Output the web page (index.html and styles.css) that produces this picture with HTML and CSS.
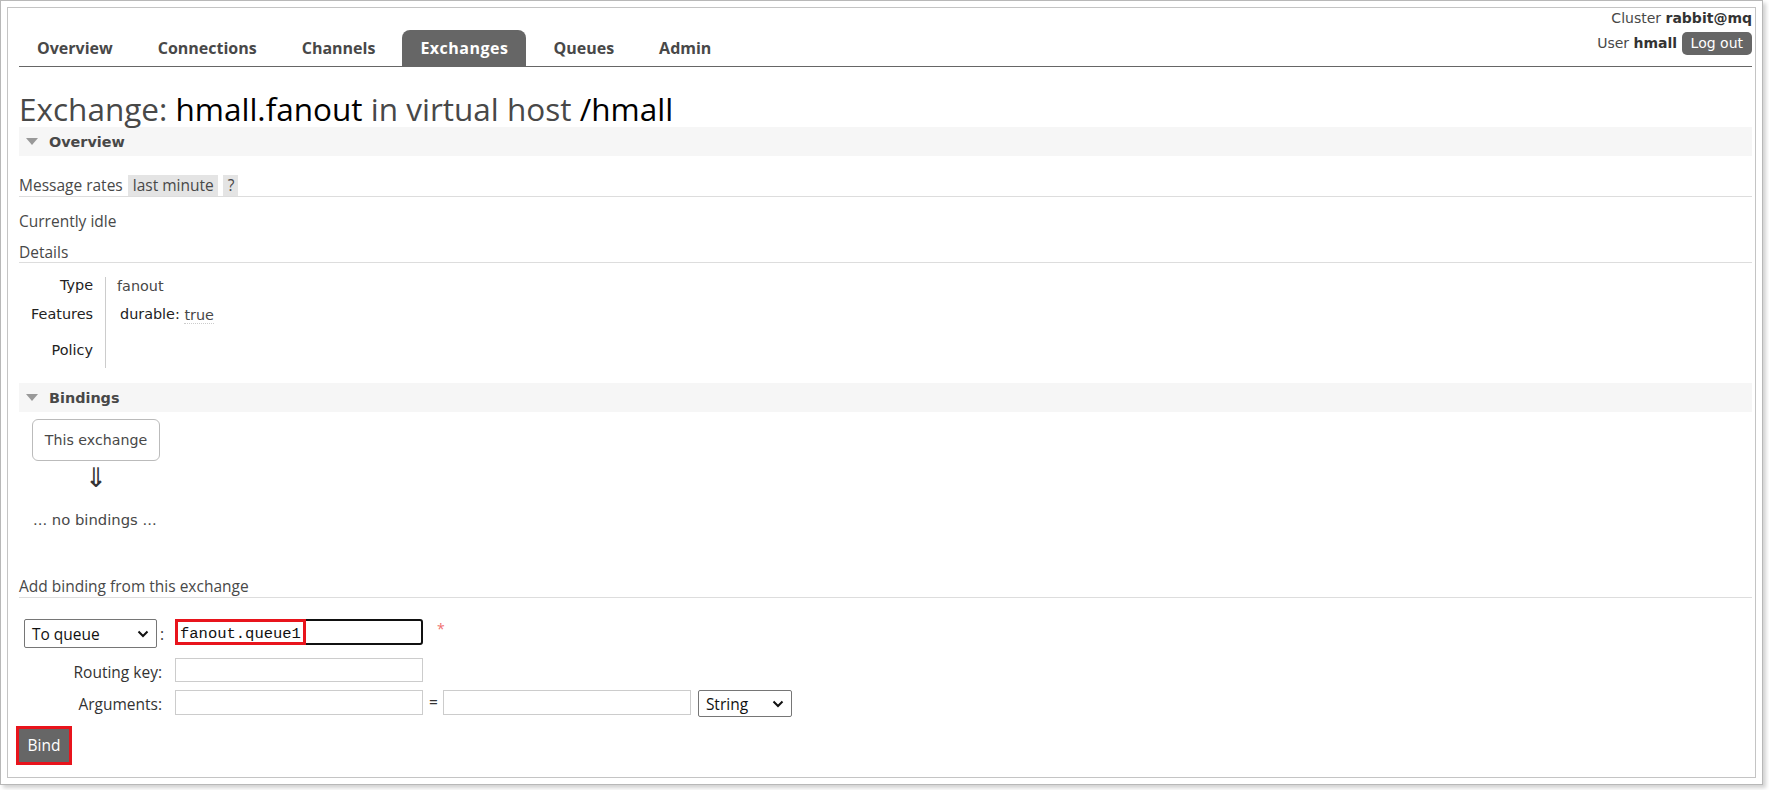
FILE: index.html
```html
<!DOCTYPE html>
<html>
<head>
<meta charset="utf-8">
<link rel="stylesheet" href="styles.css">
</head>
<body>
<div class="shot">
  <div class="page">
    <header class="top">
      <nav class="tabs">
        <a class="tab">Overview</a>
        <a class="tab">Connections</a>
        <a class="tab">Channels</a>
        <a class="tab active">Exchanges</a>
        <a class="tab">Queues</a>
        <a class="tab">Admin</a>
      </nav>
      <div class="login">
        <div class="login-row">Cluster <b>rabbit@mq</b></div>
        <div class="login-row second">User <b>hmall</b> <span class="logout">Log out</span></div>
      </div>
    </header>

    <h1 class="title">Exchange: <span class="hl">hmall.fanout</span> in virtual host <span class="hl">/hmall</span></h1>

    <div class="section-bar"><span class="tri"></span>Overview</div>
    <div class="section-body">
      <div class="rates-head">
        <span>Message rates</span>
        <span class="chip">last minute</span>
        <span class="chip q">?</span>
      </div>
      <p class="idle">Currently idle</p>
      <div class="sub-head">Details</div>
      <div class="details">
        <div class="dlabels">
          <div class="dl r1">Type</div>
          <div class="dl r2">Features</div>
          <div class="dl r3">Policy</div>
        </div>
        <div class="dvalues">
          <div class="dv r1">fanout</div>
          <div class="dv r2"><span class="key">durable:</span> <span class="val">true</span></div>
          <div class="dv r3"></div>
        </div>
      </div>
    </div>

    <div class="section-bar"><span class="tri"></span>Bindings</div>
    <div class="bindings">
      <div class="this-ex">This exchange</div>
      <div class="arrow">&#8659;</div>
      <div class="nobind">... no bindings ...</div>
    </div>

    <div class="sub-head add">Add binding from this exchange</div>
    <div class="form">
      <div class="fl sel-cell">
        <span class="select wide">To queue<svg class="chev" width="12" height="8" viewBox="0 0 12 8"><path d="M1.5 1.5 L6 6 L10.5 1.5" fill="none" stroke="#111" stroke-width="2"/></svg></span><span class="colon">:</span>
      </div>
      <div class="fv">
        <span class="input focus"><span class="mono">fanout.queue1</span><span class="mark"></span></span>
        <span class="star">*</span>
      </div>
      <div class="fl lbl">Routing key:</div>
      <div class="fv"><span class="input"></span></div>
      <div class="fl lbl">Arguments:</div>
      <div class="fv">
        <span class="input tall"></span><span class="eq">=</span><span class="input tall"></span>
        <span class="select small">String<svg class="chev" width="12" height="8" viewBox="0 0 12 8"><path d="M1.5 1.5 L6 6 L10.5 1.5" fill="none" stroke="#111" stroke-width="2"/></svg></span>
      </div>
    </div>
    <div class="bind-wrap"><span class="bind">Bind</span></div>
  </div>
</div>
</body>
</html>
```
FILE: styles.css
```css
html, body {
  margin: 0;
  padding: 0;
  background: #fff;
}
body {
  width: 1769px;
  height: 790px;
  overflow: hidden;
  color: #484848;
  font-family: "Open Sans", "Liberation Sans", sans-serif;
}
.shot {
  box-sizing: border-box;
  width: 1763px;
  height: 785px;
  border: 1px solid #b8b8b8;
  box-shadow: 3px 3px 4px rgba(0, 0, 0, 0.18);
  padding: 6px;
  background: #fff;
}
.page {
  box-sizing: border-box;
  height: 100%;
  border: 1px solid #c4c4c4;
  padding: 2px 3px 0 11px;
}

/* header */
.top {
  display: flex;
  justify-content: space-between;
  align-items: flex-start;
  border-bottom: 1px solid #666;
  height: 56px;
}
.tabs {
  display: flex;
  gap: 9px;
  align-self: flex-end;
}
.tab {
  display: block;
  padding: 0 18px;
  height: 36px;
  line-height: 36px;
  font-family: "Open Sans", "Liberation Sans", sans-serif;
  font-weight: bold;
  font-size: 16px;
  color: #484848;
  border-radius: 8px 8px 0 0;
}
.tab.active {
  background: #666;
  color: #fff;
  letter-spacing: 0.5px;
}
.login {
  font-family: "DejaVu Sans", Verdana, sans-serif;
  font-size: 14px;
  text-align: right;
  color: #484848;
}
.login-row {
  height: 17px;
  line-height: 17px;
}
.login-row.second {
  margin-top: 5px;
  height: 23px;
  line-height: 23px;
}
.login b {
  color: #333;
}
.logout {
  display: inline-block;
  background: #666;
  color: #fff;
  border-radius: 5px;
  padding: 0 9px;
  height: 23px;
  line-height: 23px;
  vertical-align: top;
}

/* title */
.title {
  font-family: "Open Sans", "Liberation Sans", sans-serif;
  font-weight: normal;
  font-size: 31.5px;
  line-height: 40px;
  margin: 22px 0 0 0;
  height: 38px;
  color: #484848;
}
.title .hl {
  color: #000;
}

/* sections */
.section-bar {
  display: flex;
  align-items: center;
  height: 29px;
  background: #f6f6f6;
  font-family: "DejaVu Sans", Verdana, sans-serif;
  font-weight: bold;
  font-size: 14.4px;
  color: #484848;
}
.tri {
  width: 0;
  height: 0;
  border-left: 6.5px solid transparent;
  border-right: 6.5px solid transparent;
  border-top: 7px solid #999;
  margin: 0 11px 0 7px;
}
.section-body {
  padding-top: 19px;
}
.rates-head {
  display: flex;
  align-items: stretch;
  border-bottom: 1px solid #ddd;
  font-size: 15.5px;
  height: 21px;
  line-height: 21px;
}
.chip {
  background: #e4e4e4;
  padding: 0 4px 0 5px;
  margin-left: 5px;
}
.idle {
  margin: 0;
  font-size: 15.5px;
  height: 20px;
  line-height: 20px;
  margin-top: 14px;
}
.sub-head {
  font-size: 15.5px;
  border-bottom: 1px solid #ddd;
  height: 20px;
  line-height: 20px;
  margin-top: 11px;
}
.details {
  display: flex;
  margin-top: 14px;
  font-family: "DejaVu Sans", Verdana, sans-serif;
  font-size: 14.4px;
}
.dlabels {
  width: 74px;
  text-align: right;
  border-right: 1px solid #ccc;
  padding-right: 12px;
  color: #222;
}
.dvalues {
  padding-left: 11px;
}
.dl, .dv {
  line-height: 17px;
}
.r1 { height: 26px; }
.r2 { height: 34px; }
.r3 { height: 31px; }
.dl.r1 { padding-top: 0; }
.dl.r2 { padding-top: 3px; height: 31px; }
.dv.r1 { padding-top: 1px; height: 25px; color: #484848; }
.dv.r2 { padding-left: 3px; color: #222; padding-top: 3px; height: 31px; }
.val {
  color: #484848;
  border-bottom: 1px dotted #ccc;
  position: relative;
  top: 1px;
}
.dl.r3 { padding-top: 5px; height: 26px; }

.section-body + .section-bar {
  margin-top: 15px;
}

/* bindings */
.bindings {
  padding: 7px 0 0 13px;
  font-family: "DejaVu Sans", Verdana, sans-serif;
  font-size: 14.2px;
}
.this-ex {
  box-sizing: border-box;
  width: 128px;
  height: 42px;
  line-height: 40px;
  border: 1px solid #bbb;
  border-radius: 6px;
  text-align: center;
}
.arrow {
  width: 128px;
  text-align: center;
  font-size: 27px;
  line-height: 28px;
  height: 28px;
  margin-top: 3px;
  color: #333;
}
.nobind {
  margin-top: 19px;
  padding-left: 1px;
  line-height: 17px;
  font-size: 14.8px;
}
.sub-head.add {
  margin-top: 48px;
  height: 21px;
  line-height: 21px;
}

/* form */
.form {
  display: grid;
  grid-template-columns: 150px auto;
  grid-template-rows: 39px 32px 27px;
  column-gap: 6px;
  margin-top: 21px;
  font-size: 15.5px;
  align-items: start;
}
.fl {
  text-align: right;
  padding-right: 7px;
  color: #333;
}
.fl.lbl {
  padding-top: 2px;
  line-height: 24px;
}
.sel-cell {
  display: flex;
  justify-content: flex-end;
  align-items: center;
  padding-right: 5px;
  height: 29px;
}
.fv {
  display: flex;
  align-items: flex-start;
}
.select {
  box-sizing: border-box;
  display: inline-flex;
  align-items: center;
  justify-content: space-between;
  border: 1px solid #767676;
  border-radius: 2px;
  background: #fff;
  color: #111;
  padding: 0 7px 0 7px;
  font-size: 15.5px;
}
.select.wide {
  width: 133px;
  height: 29px;
}
.select.small {
  width: 94px;
  height: 27px;
  margin-left: 7px;
}
.colon {
  margin-left: 3px;
  color: #333;
}
.input {
  box-sizing: border-box;
  display: inline-block;
  position: relative;
  width: 248px;
  height: 24px;
  border: 1px solid #ccc;
  background: #fff;
}
.input.tall {
  height: 25px;
}
.input.focus {
  height: 26px;
  border: 2px solid #111;
  border-radius: 3px;
}
.mono {
  font-family: "Liberation Mono", "Courier New", monospace;
  font-size: 15.5px;
  line-height: 22px;
  padding-left: 3px;
  color: #111;
}
.mark {
  position: absolute;
  left: -2px;
  top: -2px;
  width: 131px;
  height: 26px;
  box-sizing: border-box;
  border: 3px solid #e8141c;
}
.star {
  color: #f07070;
  margin-left: 14px;
  font-size: 14px;
  margin-top: 0;
}
.eq {
  margin: 0 5px 0 6px;
  color: #333;
  line-height: 25px;
}
.bind-wrap {
  margin-top: 9px;
  margin-left: -3px;
}
.bind {
  display: inline-block;
  box-sizing: border-box;
  width: 56px;
  height: 39px;
  line-height: 33px;
  text-align: center;
  background: #666;
  color: #fff;
  border: 3px solid #e8141c;
  font-size: 15.5px;
}
```
